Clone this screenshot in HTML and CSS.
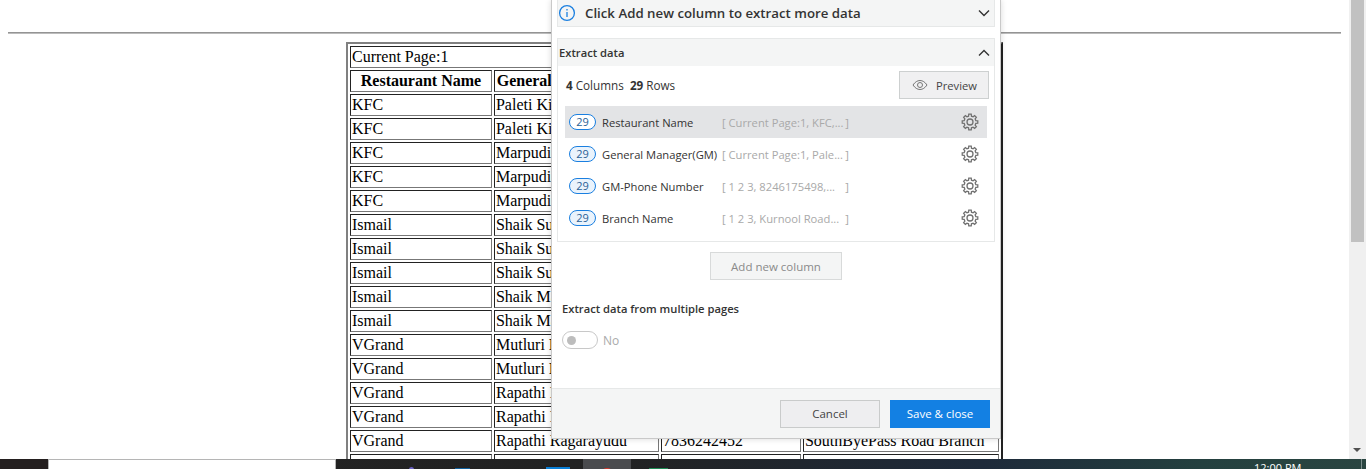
FILE: index.html
```html
<!DOCTYPE html>
<html lang="en">
<head>
	<meta charset="UTF-8">
	<title>Extract data</title>
	<link rel="stylesheet" href="styles.css">
</head>
<body>
	<svg class="defs" width="0" height="0">
		<symbol id="gear" viewBox="0 0 24 24">
			<circle cx="12" cy="12" r="4"/>
			<path d="M19.76 10.06L22.37 10.36V13.64L19.76 13.94L18.86 16.12L20.49 18.17L18.17 20.49L16.12 18.86L13.94 19.76L13.64 22.37H10.36L10.06 19.76L7.88 18.86L5.83 20.49L3.51 18.17L5.14 16.12L4.24 13.94L1.63 13.64V10.36L4.24 10.06L5.14 7.88L3.51 5.83L5.83 3.51L7.88 5.14L10.06 4.24L10.36 1.63H13.64L13.94 4.24L16.12 5.14L18.17 3.51L20.49 5.83L18.86 7.88Z"/>
		</symbol>
	</svg>

	<div class="window">
		<div class="page">
			<hr class="rule">
			<table class="report" border="1">
				<colgroup>
					<col class="col-name">
					<col class="col-manager">
					<col class="col-phone">
					<col class="col-branch">
				</colgroup>
				<tr><td colspan="4">Current Page:1</td></tr>
				<tr><th>Restaurant Name</th><th>General Manager(GM)</th><th>GM-Phone Number</th><th>Branch Name</th></tr>
				<tr><td>KFC</td><td>Paleti Kiran</td><td>8246175498</td><td>Kurnool Road Branch</td></tr>
				<tr><td>KFC</td><td>Paleti Kiran</td><td>8246175498</td><td>Kurnool Road Branch</td></tr>
				<tr><td>KFC</td><td>Marpudi Ravi</td><td>8246175499</td><td>Kurnool Road Branch</td></tr>
				<tr><td>KFC</td><td>Marpudi Ravi</td><td>8246175499</td><td>Kurnool Road Branch</td></tr>
				<tr><td>KFC</td><td>Marpudi Ravi</td><td>8246175499</td><td>Kurnool Road Branch</td></tr>
				<tr><td>Ismail</td><td>Shaik Subhani</td><td>7836242450</td><td>Kurnool Road Branch</td></tr>
				<tr><td>Ismail</td><td>Shaik Subhani</td><td>7836242450</td><td>Kurnool Road Branch</td></tr>
				<tr><td>Ismail</td><td>Shaik Subhani</td><td>7836242450</td><td>Kurnool Road Branch</td></tr>
				<tr><td>Ismail</td><td>Shaik Masthan</td><td>7836242451</td><td>Kurnool Road Branch</td></tr>
				<tr><td>Ismail</td><td>Shaik Masthan</td><td>7836242451</td><td>Kurnool Road Branch</td></tr>
				<tr><td>VGrand</td><td>Mutluri Ramesh</td><td>7836242451</td><td>SouthByePass Road Branch</td></tr>
				<tr><td>VGrand</td><td>Mutluri Ramesh</td><td>7836242451</td><td>SouthByePass Road Branch</td></tr>
				<tr><td>VGrand</td><td>Rapathi Ragarayudu</td><td>7836242452</td><td>SouthByePass Road Branch</td></tr>
				<tr><td>VGrand</td><td>Rapathi Ragarayudu</td><td>7836242452</td><td>SouthByePass Road Branch</td></tr>
				<tr><td>VGrand</td><td>Rapathi Ragarayudu</td><td>7836242452</td><td>SouthByePass Road Branch</td></tr>
				<tr><td></td><td></td><td></td><td></td></tr>
			</table>
		</div>
		<div class="scrollbar">
			<div class="thumb"></div>
			<div class="arrow"></div>
		</div>

		<div class="panel">
			<div class="panel-body">
				<div class="tip">
					<svg class="info" width="18" height="18" viewBox="0 0 18 18" fill="none" stroke="#1a7fe0" stroke-width="1.3"><circle cx="9" cy="9" r="7.4"/><path d="M9 8v5"/><path d="M9 5v1.4"/></svg>
					<span class="tip-text">Click Add new column to extract more data</span>
					<svg class="chev" width="12" height="8" viewBox="0 0 12 8" fill="none" stroke="#333" stroke-width="1.4"><path d="M1 1.500l5 5 5-5"/></svg>
				</div>

				<div class="section">
					<div class="section-head">
						<span>Extract data</span>
						<svg class="chev" width="12" height="8" viewBox="0 0 12 8" fill="none" stroke="#333" stroke-width="1.4"><path d="M1 6.500l5-5 5 5"/></svg>
					</div>
					<div class="summary">
						<div><b>4</b> Columns &nbsp;<b>29</b> Rows</div>
						<button class="preview">
							<svg width="16" height="12" viewBox="0 0 16 12" fill="none" stroke="#777" stroke-width="1"><path d="M1 6c2-3 4.400-4.500 7-4.500S13 3 15 6c-2 3-4.400 4.500-7 4.500S3 9 1 6z"/><circle cx="8" cy="6" r="2.500"/></svg>
							Preview
						</button>
					</div>
					<ul class="columns">
						<li class="column selected">
							<span class="count">29</span>
							<span class="col-title">Restaurant Name</span>
							<span class="sample"><span>[ Current Page:1, KFC,...</span><span>]</span></span>
							<svg class="gear" width="18" height="18"><use href="#gear"/></svg>
						</li>
						<li class="column">
							<span class="count">29</span>
							<span class="col-title">General Manager(GM)</span>
							<span class="sample"><span>[ Current Page:1, Pale...</span><span>]</span></span>
							<svg class="gear" width="18" height="18"><use href="#gear"/></svg>
						</li>
						<li class="column">
							<span class="count">29</span>
							<span class="col-title">GM-Phone Number</span>
							<span class="sample"><span>[ 1 2 3, 8246175498,...</span><span>]</span></span>
							<svg class="gear" width="18" height="18"><use href="#gear"/></svg>
						</li>
						<li class="column">
							<span class="count">29</span>
							<span class="col-title">Branch Name</span>
							<span class="sample"><span>[ 1 2 3, Kurnool Road...</span><span>]</span></span>
							<svg class="gear" width="18" height="18"><use href="#gear"/></svg>
						</li>
					</ul>
				</div>

				<div class="add-row"><button class="add-col">Add new column</button></div>

				<div class="pages-label">Extract data from multiple pages</div>
				<div class="toggle-row">
					<span class="toggle"><span class="knob"></span></span>
					<span class="toggle-text">No</span>
				</div>
			</div>
			<div class="panel-foot">
				<button class="cancel">Cancel</button>
				<button class="save">Save &amp; close</button>
			</div>
		</div>
	</div>

	<div class="taskbar">
		<div class="start"></div>
		<div class="search"></div>
		<div class="tasks">
			<span class="task task-purple"></span>
			<span class="task task-blue"></span>
			<span class="task task-win"></span>
			<span class="task-active"><span class="task task-red"></span></span>
			<span class="task task-green"></span>
		</div>
		<div class="clock">12:00 PM</div>
		<div class="show-desktop"></div>
	</div>
</body>
</html>
```
FILE: styles.css
```css
*{
	margin: 0;
	padding: 0;
	box-sizing: border-box;
}
html, body{
	height: 469px;
	overflow: hidden;
	background: #fff;
}
.defs{
	position: absolute;
}
.window{
	position: relative;
	display: flex;
	height: 459px;
	overflow: hidden;
}
.page{
	flex: 1;
	padding: 32px 8px 0;
	font-family: "Liberation Serif", serif;
	font-size: 16px;
	color: #000;
}
.rule{
	border: 0;
	border-top: 1px solid #949494;
	border-bottom: 1px solid #bcbcbc;
	height: 2px;
	margin-bottom: 8px;
}
.report{
	margin: 0 auto;
	table-layout: fixed;
	width: 657px;
	border-width: 2px;
	border-style: solid;
	border-color: #808080 #222 #222 #808080;
	border-spacing: 2px;
}
.report td, .report th{
	border-width: 1px;
	border-style: solid;
	border-color: #222 #777 #777 #222;
	padding: 1px;
	height: 22px;
	white-space: nowrap;
	overflow: hidden;
}
.col-name{ width: 142px; }
.col-manager{ width: 165px; }
.col-phone{ width: 140px; }
.col-branch{ width: 196px; }

.scrollbar{
	position: relative;
	width: 17px;
	background: #f0f0f0;
	padding: 0 2px;
}
.thumb{
	height: 242px;
	background: #c1c1c1;
}
.arrow{
	position: absolute;
	left: 4px;
	bottom: 7px;
	border-left: 4px solid transparent;
	border-right: 4px solid transparent;
	border-top: 4px solid #505050;
}

/* the dialog lies over the page */
.panel{
	position: absolute;
	left: 551px;
	top: 0;
	width: 450px;
	height: 439px;
	background: #fff;
	border: 1px solid #c9c9c9;
	border-top: 0;
	box-shadow: 0 0 6px rgba(0,0,0,.15);
	display: flex;
	flex-direction: column;
	font-family: "Open Sans", sans-serif;
	font-size: 11.200px;
	color: #333;
}
.panel-body{
	flex: 1;
	padding: 0 5px;
}
.tip{
	display: flex;
	align-items: center;
	height: 27px;
	background: #f4f5f5;
	border: 1px solid #e6e8e8;
	border-top: 0;
	padding: 0 4px 0 0;
	font-size: 13.250px;
	font-weight: 600;
	color: #333;
}
.tip-text{
	flex: 1;
	margin-left: 9px;
}
.section{
	margin-top: 11px;
	height: 204px;
	border: 1px solid #e6e8e8;
}
.section-head{
	display: flex;
	align-items: center;
	justify-content: space-between;
	height: 27px;
	background: #f4f5f5;
	padding: 0 4px 0 1px;
	font-size: 11.200px;
	font-weight: 600;
}
.summary{
	display: flex;
	align-items: center;
	justify-content: space-between;
	height: 40px;
	padding: 0 5px 2px 8px;
	font-size: 11.700px;
}
.summary b{
	font-weight: 700;
}
.preview{
	display: flex;
	align-items: center;
	gap: 8px;
	width: 90px;
	height: 28px;
	padding-left: 12px;
	background: #f0f0f1;
	border: 1px solid #cdd0d0;
	font: inherit;
	font-size: 11.200px;
	color: #444;
}
.columns{
	list-style: none;
	padding: 0 7px;
}
.column{
	display: flex;
	align-items: center;
	height: 32px;
	padding: 0 8px 0 4px;
}
.selected{
	background: #e3e4e6;
}
.count{
	width: 27px;
	height: 16px;
	line-height: 14px;
	border: 1px solid #1a7fe0;
	border-radius: 8px;
	background: #eaf3fc;
	color: #2a5f96;
	text-align: center;
	font-size: 11px;
}
.selected .count{
	background: #fff;
}
.col-title{
	width: 120px;
	margin-left: 6px;
	white-space: nowrap;
	font-size: 11.200px;
}
.sample{
	display: flex;
	justify-content: space-between;
	width: 127px;
	margin-right: auto;
	color: #a9a9a9;
	white-space: nowrap;
	font-size: 11.200px;
}
.gear{
	fill: none;
	stroke: #707070;
	stroke-width: 1.700px;
}
.add-row{
	display: flex;
	justify-content: center;
	margin-top: 10px;
}
.add-col{
	width: 132px;
	height: 28px;
	background: #f4f5f5;
	border: 1px solid #d8dada;
	font: inherit;
	font-size: 11.500px;
	color: #8a8a8a;
}
.pages-label{
	margin-top: 20px;
	padding-left: 5px;
	font-weight: 600;
	color: #333;
	line-height: 18px;
}
.toggle-row{
	display: flex;
	align-items: center;
	gap: 5px;
	margin-top: 13px;
	padding-left: 5px;
	font-size: 12px;
	color: #aaa;
}
.toggle{
	display: flex;
	align-items: center;
	width: 36px;
	height: 18px;
	border: 1px solid #c8c8c8;
	border-radius: 9px;
	padding-left: 4px;
}
.knob{
	width: 9px;
	height: 9px;
	border-radius: 50%;
	background: #bdbdbd;
}
.panel-foot{
	display: flex;
	justify-content: flex-end;
	align-items: center;
	gap: 10px;
	height: 50px;
	padding: 0 10px 0 0;
	background: #f4f5f5;
	border-top: 1px solid #e6e8e8;
}
.cancel, .save{
	width: 100px;
	height: 28px;
	font: inherit;
	font-size: 11.500px;
}
.cancel{
	background: #eeeef0;
	border: 1px solid #c9cbcb;
	color: #444;
}
.save{
	background: #1380e3;
	border: 0;
	color: #fff;
}

.taskbar{
	position: relative;
	display: flex;
	height: 10px;
	overflow: hidden;
	background: linear-gradient(90deg, #232323 0, #222 45%, #1e2a3a 72%, #24403f 88%, #2a4541 100%);
}
.start{
	width: 48px;
	background: #241f1f;
}
.search{
	width: 288px;
	background: #fff;
	border-top: 1px solid #b5b5b5;
	border-left: 1px solid #b5b5b5;
	border-right: 1px solid #b5b5b5;
}
.tasks{
	flex: 1;
	position: relative;
}
.task{
	position: absolute;
	height: 8px;
}
.task-purple{ left: 73px; width: 5px; top: 8px; background: #6b62c4; border-radius: 3px 3px 0 0; }
.task-blue{ left: 119px; width: 15px; top: 9px; background: #0f5f9c; }
.task-win{ left: 210px; width: 24px; top: 8px; background: #0a7fd6; }
.task-active{
	position: absolute;
	left: 247px;
	width: 48px;
	height: 10px;
	background: #4a4b4e;
}
.task-red{ left: 17px; width: 14px; top: 9px; background: #d8392b; border-radius: 7px 7px 0 0; }
.task-green{ left: 313px; width: 19px; top: 9px; background: #1d8a53; }
.clock{
	position: absolute;
	left: 1254px;
	top: 2px;
	font-family: "Open Sans", sans-serif;
	font-size: 11px;
	line-height: 14px;
	color: #fff;
}
.show-desktop{
	position: absolute;
	left: 1361px;
	top: 0;
	width: 1px;
	height: 10px;
	background: #7d8f8d;
}
```
